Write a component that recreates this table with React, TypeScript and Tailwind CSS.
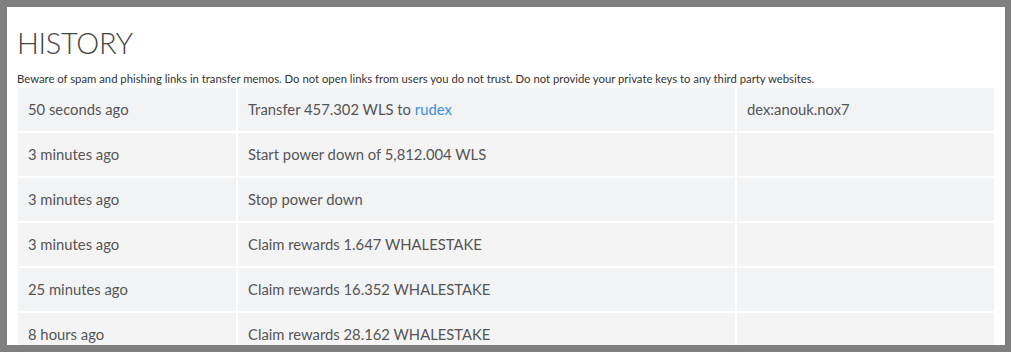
const rows: { time: string; op: string; link?: string; memo?: string }[] = [
  { time: '50 seconds ago', op: 'Transfer 457.302 WLS to ', link: 'rudex', memo: 'dex:anouk.nox7' },
  { time: '3 minutes ago', op: 'Start power down of 5,812.004 WLS' },
  { time: '3 minutes ago', op: 'Stop power down' },
  { time: '3 minutes ago', op: 'Claim rewards 1.647 WHALESTAKE' },
  { time: '25 minutes ago', op: 'Claim rewards 16.352 WHALESTAKE' },
  { time: '8 hours ago', op: 'Claim rewards 28.162 WHALESTAKE' },
]

export default function App() {
  return (
    <div className="h-[352px] w-[1011px] overflow-hidden bg-[#7f7f7f] pt-[7px] pl-[7px] pr-[6px]">
      <div
        className="h-[338px] overflow-hidden bg-white pl-[10px] pr-[11px]"
        style={{ fontFamily: 'Lato, "Liberation Sans", sans-serif' }}
      >
        <h1 className="pt-[16px] text-[29px] leading-[40px] font-light tracking-[-0.3px] text-[#444]">HISTORY</h1>
        <p className="mt-[8px] text-[11.3px] leading-[16px] text-[#333]">
          Beware of spam and phishing links in transfer memos. Do not open links from users you do not trust. Do not
          provide your private keys to any third party websites.
        </p>
        <div className="ml-[1px] mt-[1px] grid grid-cols-[218px_497px_257px] gap-[2px]">
          {rows.map((r, i) => {
            const bg = i % 2 === 0 ? 'bg-[#f2f3f5]' : 'bg-[#f4f4f4]'
            return (
              <div key={i} className="contents">
                <div className={`${bg} flex h-[43px] items-center px-[10px] text-[14.8px] text-[#555]`}>{r.time}</div>
                <div className={`${bg} flex h-[43px] items-center px-[10px] text-[14.8px] text-[#555]`}>
                  <span className="whitespace-pre">{r.op}</span>
                  {r.link && <span className="text-[#3a8fe0]">{r.link}</span>}
                </div>
                <div className={`${bg} flex h-[43px] items-center px-[10px] text-[14.8px] text-[#555]`}>{r.memo}</div>
              </div>
            )
          })}
        </div>
      </div>
    </div>
  )
}
